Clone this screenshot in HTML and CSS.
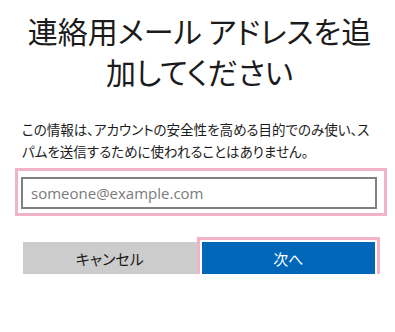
FILE: index.html
```html
<!DOCTYPE html>
<html lang="ja">
<head>
<meta charset="utf-8">
<link rel="stylesheet" href="styles.css">
</head>
<body>
<div class="page">
  <h1 class="title">連絡用メール アドレスを追加してください</h1>
  <p class="info">この情報は、アカウントの安全性を高める目的でのみ使い、スパムを送信するために使われることはありません。</p>
  <div class="field-hl">
    <input class="email" type="email" placeholder="someone@example.com">
  </div>
  <div class="actions">
    <button class="btn btn-cancel" type="button">キャンセル</button>
    <button class="btn btn-next" type="button">次へ</button>
  </div>
</div>
</body>
</html>
```
FILE: styles.css
```css
html, body {
  margin: 0;
  padding: 0;
  background: #ffffff;
}
body {
  font-family: "Noto Sans CJK JP", "Noto Sans", sans-serif;
  color: #1b1b1b;
}
.page {
  padding: 10px 18px 0 22px;
}
.title {
  margin: 0 -4px;
  font-size: 30px;
  line-height: 41px;
  font-weight: 400;
  text-align: center;
  font-feature-settings: "palt";
}
.info {
  margin: 26px 0 0 0;
  font-size: 13.5px;
  line-height: 22px;
  letter-spacing: 0;
  font-feature-settings: "palt";
}
.field-hl {
  margin: 6px -10px 0 -7px;
  border: 3px solid #f2b3c9;
  padding: 6px 7px 4px 3px;
}
.email {
  display: block;
  box-sizing: border-box;
  width: 100%;
  height: 32px;
  margin: 0;
  border: 2px solid #808080;
  padding: 0 8px;
  font-family: "Open Sans", "Noto Sans", sans-serif;
  font-size: 15px;
  color: #1b1b1b;
  background: #fff;
  outline: none;
}
.email::placeholder {
  color: #7a7a7a;
}
.actions {
  display: grid;
  grid-template-columns: 1fr 1fr;
  gap: 5px;
  margin: 26px 2px 0 1px;
}
.btn {
  height: 32px;
  border: none;
  margin: 0;
  font-family: "Noto Sans CJK JP", sans-serif;
  font-size: 15px;
  font-feature-settings: "palt";
  cursor: pointer;
}
.btn-cancel {
  background: #cccccc;
  color: #1b1b1b;
}
.btn-next {
  background: #0067b8;
  color: #ffffff;
  outline: 3px solid #f2b3c9;
  outline-offset: 2px;
}
```
